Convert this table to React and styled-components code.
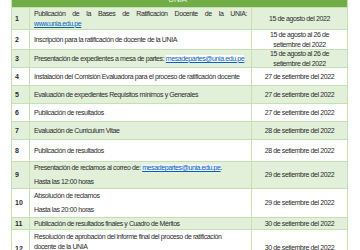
import styled, { createGlobalStyle } from "styled-components";

const GlobalStyle = createGlobalStyle`
  html, body {
    margin: 0;
    padding: 0;
    background: #ffffff;
  }
  body {
    font-family: "Liberation Sans", Arial, sans-serif;
  }
`;

const rows = [
  { n: "1", h: 21, alt: true, date: ["15 de agosto del 2022"], desc: "first" },
  { n: "2", h: 19, date: ["15 de agosto al 26 de", "setiembre del 2022"], desc: ["Inscripción para la ratificación de docente de la UNIA"] },
  { n: "3", h: 17, alt: true, date: ["15 de agosto al 26 de", "setiembre del 2022"], desc: "mail" },
  { n: "4", h: 17, date: ["27 de setiembre del 2022"], desc: ["Instalación del Comisión Evaluadora  para el proceso de ratificación docente"] },
  { n: "5", h: 17, alt: true, date: ["27 de setiembre del 2022"], desc: ["Evaluación de expedientes Requisitos mínimos y Generales"] },
  { n: "6", h: 17, date: ["27 de setiembre del 2022"], desc: ["Publicación de resultados"] },
  { n: "7", h: 17, alt: true, date: ["28 de setiembre del 2022"], desc: ["Evaluación de Curriculum Vitae"] },
  { n: "8", h: 21, date: ["28 de setiembre del 2022"], desc: ["Publicación de resultados"] },
  { n: "9", h: 26, alt: true, date: ["29 de setiembre del 2022"], desc: "claims" },
  { n: "10", h: 28, date: ["29 de setiembre del 2022"], desc: ["Absolución de reclamos", "Hasta las 20:00 horas"], spaced: true },
  { n: "11", h: 11, alt: true, date: ["30 de setiembre del 2022"], desc: ["Publicación de resultados finales y Cuadro de Méritos"] },
  { n: "12", h: 30, date: ["30 de setiembre del 2022"], desc: ["Resolución de aprobación del informe final del proceso de ratificación", "docente de la UNIA"], top: true },
];

function Description({ row }) {
  if (row.desc === "first") {
    return (
      <>
        <JustLine>Publicación de la Bases de Ratificación Docente de la UNIA:</JustLine>
        <Line>
          <Link href="#">www.unia.edu.pe</Link>
        </Line>
      </>
    );
  }
  if (row.desc === "mail") {
    return (
      <Line>
        Presentación de expedientes a mesa de partes:{" "}
        <Mail href="#" $bg="#ffffff">mesadepartes@unia.edu.pe</Mail>
      </Line>
    );
  }
  if (row.desc === "claims") {
    return (
      <>
        <Line $space>
          Presentación de reclamos al correo de:{" "}
          <Mail href="#" $bg="#eef3fa">mesadepartes@unia.edu.pe</Mail>.
        </Line>
        <Line>Hasta las 12:00 horas</Line>
      </>
    );
  }
  return row.desc.map((t, i) => (
    <Line key={i} $space={row.spaced && i === 0}>
      {t}
    </Line>
  ));
}

export default function App() {
  return (
    <Page>
      <GlobalStyle />
      <Table>
        <Header>
          <HeaderText>UNIA</HeaderText>
        </Header>
        {rows.map((row) => (
          <Row key={row.n} $h={row.h}>
            <NumCell $alt={row.alt} $top={row.top}>{row.n}</NumCell>
            <DescCell $alt={row.alt} $top={row.top}>
              <Description row={row} />
            </DescCell>
            <DateCell $alt={row.alt} $top={row.top}>
              {row.date.map((d) => (
                <Line key={d}>{d}</Line>
              ))}
            </DateCell>
          </Row>
        ))}
      </Table>
    </Page>
  );
}

const Page = styled.div`
  width: 360px;
  height: 250px;
  overflow: hidden;
  padding-left: 11px;
  box-sizing: border-box;
`;

const Table = styled.div`
  width: 337px;
  display: flex;
  flex-direction: column;
  gap: 1px;
  background: #c5e0b3;
  padding: 0 1px 1px 1px;
  box-sizing: border-box;
  color: #2b2b2b;
  font-size: 7px;
  letter-spacing: -0.4px;
`;

const Header = styled.div`
  height: 7px;
  background: #70ad47;
  overflow: hidden;
  display: flex;
  justify-content: center;
  align-items: flex-end;
`;

const HeaderText = styled.div`
  color: #e9f4e1;
  font-size: 8px;
  line-height: 8px;
  letter-spacing: -0.2px;
  margin-bottom: 3px;
  margin-right: 4px;
`;

const Row = styled.div`
  display: grid;
  grid-template-columns: 17px 221px 95px;
  gap: 1px;
  height: ${(p) => p.$h}px;
  min-height: ${(p) => p.$h}px;
`;

const Cell = styled.div`
  background: ${(p) => (p.$alt ? "#e2efd9" : "#ffffff")};
  display: flex;
  flex-direction: column;
  justify-content: ${(p) => (p.$top ? "flex-start" : "center")};
  padding-top: ${(p) => (p.$top ? "2px" : "0")};
  overflow: hidden;
  line-height: 10px;
`;

const NumCell = styled(Cell)`
  font-weight: bold;
  letter-spacing: 0;
  padding-left: 3px;
  justify-content: center;
  padding-top: ${(p) => (p.$top ? "8px" : "0")};
`;

const DescCell = styled(Cell)`
  padding-left: 4px;
  padding-right: 4px;
`;

const DateCell = styled(Cell)`
  align-items: center;
  text-align: center;
  justify-content: center;
  padding-top: ${(p) => (p.$top ? "6px" : "0")};
`;

const Line = styled.div`
  white-space: nowrap;
  margin-bottom: ${(p) => (p.$space ? "4px" : "0")};
`;

const JustLine = styled.div`
  text-align: justify;
  text-align-last: justify;
`;

const Link = styled.a`
  color: #0563c1;
  text-decoration: underline;
`;

const Mail = styled(Link)`
  background: ${(p) => p.$bg};
`;
